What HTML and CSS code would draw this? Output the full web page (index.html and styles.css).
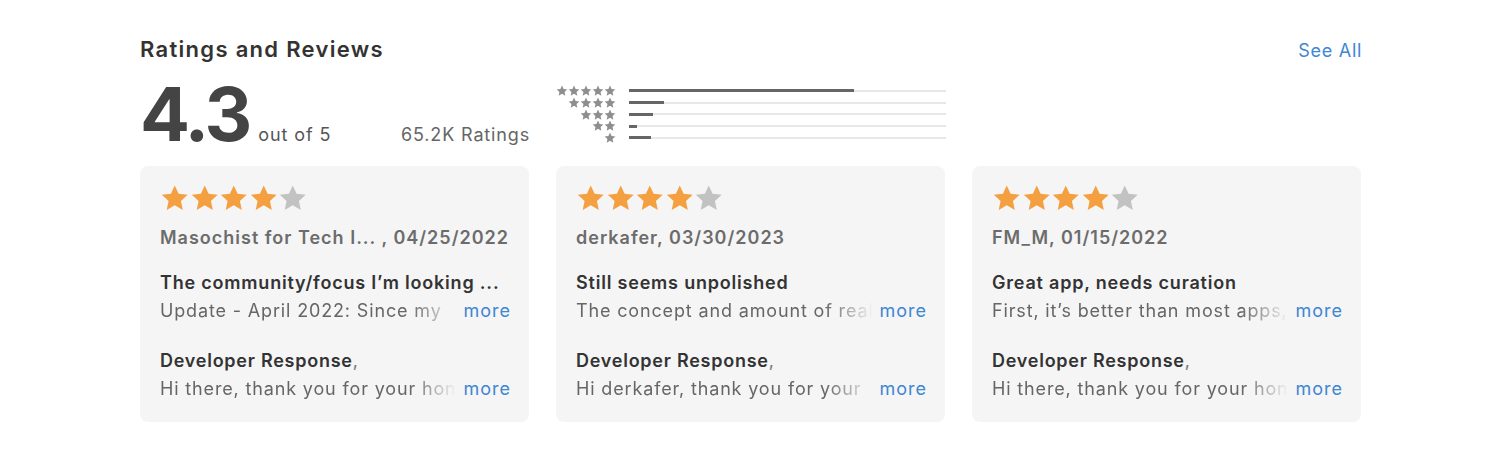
FILE: index.html
```html
<!DOCTYPE html>
<html>
<head>
<meta charset="utf-8">
<link rel="stylesheet" href="styles.css">
</head>
<body>
<svg width="0" height="0" class="defs">
  <defs>
    <symbol id="star" viewBox="0 0 24 24"><path d="M12 1.2l3.3 7.1 7.8.9-5.8 5.3 1.6 7.7L12 18.3l-6.9 3.9 1.6-7.7L.9 9.2l7.8-.9z"/></symbol>
  </defs>
</svg>
<section class="ratings">
  <header class="head">
    <h2 class="title">Ratings and Reviews</h2>
    <a class="see-all">See All</a>
  </header>
  <div class="summary">
    <div class="score"><span class="big">4.3</span><span class="outof">out of 5</span></div>
    <div class="count">65.2K Ratings</div>
    <div class="hist">
      <div class="hrow"><span class="hstars"><svg><use href="#star"/></svg><svg><use href="#star"/></svg><svg><use href="#star"/></svg><svg><use href="#star"/></svg><svg><use href="#star"/></svg></span><span class="track"><span class="fill" style="width:71%"></span></span></div>
      <div class="hrow"><span class="hstars"><svg><use href="#star"/></svg><svg><use href="#star"/></svg><svg><use href="#star"/></svg><svg><use href="#star"/></svg></span><span class="track"><span class="fill" style="width:11%"></span></span></div>
      <div class="hrow"><span class="hstars"><svg><use href="#star"/></svg><svg><use href="#star"/></svg><svg><use href="#star"/></svg></span><span class="track"><span class="fill" style="width:7.5%"></span></span></div>
      <div class="hrow"><span class="hstars"><svg><use href="#star"/></svg><svg><use href="#star"/></svg></span><span class="track"><span class="fill" style="width:2.6%"></span></span></div>
      <div class="hrow"><span class="hstars"><svg><use href="#star"/></svg></span><span class="track"><span class="fill" style="width:7%"></span></span></div>
    </div>
  </div>
  <div class="cards">
    <article class="card">
      <div class="stars"><svg class="on"><use href="#star"/></svg><svg class="on"><use href="#star"/></svg><svg class="on"><use href="#star"/></svg><svg class="on"><use href="#star"/></svg><svg class="off"><use href="#star"/></svg></div>
      <div class="author">Masochist for Tech I... , 04/25/2022</div>
      <div class="rtitle">The community/focus I’m looking ...</div>
      <div class="line"><span class="text">Update - April 2022: Since my</span><a class="more">more</a></div>
      <div class="dev">Developer Response<span class="comma">,</span></div>
      <div class="line"><span class="text">Hi there, thank you for your hon</span><a class="more">more</a></div>
    </article>
    <article class="card">
      <div class="stars"><svg class="on"><use href="#star"/></svg><svg class="on"><use href="#star"/></svg><svg class="on"><use href="#star"/></svg><svg class="on"><use href="#star"/></svg><svg class="off"><use href="#star"/></svg></div>
      <div class="author">derkafer, 03/30/2023</div>
      <div class="rtitle">Still seems unpolished</div>
      <div class="line"><span class="text">The concept and amount of real</span><a class="more">more</a></div>
      <div class="dev">Developer Response<span class="comma">,</span></div>
      <div class="line"><span class="text">Hi derkafer, thank you for your</span><a class="more">more</a></div>
    </article>
    <article class="card">
      <div class="stars"><svg class="on"><use href="#star"/></svg><svg class="on"><use href="#star"/></svg><svg class="on"><use href="#star"/></svg><svg class="on"><use href="#star"/></svg><svg class="off"><use href="#star"/></svg></div>
      <div class="author">FM_M, 01/15/2022</div>
      <div class="rtitle">Great app, needs curation</div>
      <div class="line"><span class="text">First, it’s better than most apps,</span><a class="more">more</a></div>
      <div class="dev">Developer Response<span class="comma">,</span></div>
      <div class="line"><span class="text">Hi there, thank you for your hon</span><a class="more">more</a></div>
    </article>
  </div>
</section>
</body>
</html>
```

FILE: styles.css
```css
* { box-sizing: border-box; }
html, body { margin: 0; padding: 0; background: #fff; }
body { font-family: Inter, "Noto Sans", "Liberation Sans", sans-serif; color: #333; }
.defs { position: absolute; width: 0; height: 0; }

.ratings { width: 1222px; margin-left: 140px; padding-top: 34px; }

.head { display: flex; justify-content: space-between; align-items: center; height: 30px; }
.title { margin: 0; font-size: 22px; font-weight: 600; color: #333; letter-spacing: 1.3px; }
.see-all { font-size: 18px; color: #3f86d4; letter-spacing: 0.7px; margin-top: 2px; }

.summary { display: flex; align-items: flex-end; height: 86px; }
.score { width: 261px; display: flex; align-items: baseline; }
.big { font-size: 74px; font-weight: 700; color: #444; letter-spacing: -3px; line-height: 1; margin-bottom: -1px; }
.outof { font-size: 18px; color: #555; margin-left: 9px; letter-spacing: 0.9px; }
.count { width: 155px; font-size: 18px; color: #666; line-height: 1; padding-bottom: 6px; letter-spacing: 0.85px; }
.hist { display: flex; flex-direction: column; align-self: flex-start; margin-top: 21px; }
.hrow { display: flex; align-items: center; height: 11.75px; }
.hstars { width: 60px; display: flex; justify-content: flex-end; fill: #8e8e8e; }
.hstars svg { width: 12px; height: 11.5px; }
.track { width: 317px; margin-left: 13px; height: 2px; background: #e8e8e8; display: flex; }
.fill { height: 3px; margin-top: -0.5px; background: #666; }

.cards { display: flex; gap: 27px; margin-top: 16px; }
.card { width: 389px; height: 256px; background: #f5f5f5; border-radius: 8px; padding: 18px 18px 0 20px; }
.stars { display: flex; height: 28px; }
.stars svg { width: 29.5px; height: 28px; }
.stars .on { fill: #f4a041; }
.stars .off { fill: #c2c2c2; }
.author { margin-top: 12px; font-size: 18px; line-height: 28px; font-weight: 600; color: #6c6c6c; white-space: nowrap; letter-spacing: 1px; }
.rtitle { margin-top: 17px; font-size: 18px; line-height: 28px; font-weight: 600; color: #333; white-space: nowrap; letter-spacing: 0.8px; }
.dev { margin-top: 22px; font-size: 18px; line-height: 28px; font-weight: 600; color: #333; letter-spacing: 0.75px; }
.comma { color: #777; font-weight: 400; }
.line { display: flex; font-size: 18px; line-height: 28px; color: #666; letter-spacing: 0.85px; }
.text { flex: 1; margin-right: 6px; overflow: hidden; white-space: nowrap;
  -webkit-mask-image: linear-gradient(to right, #000 84%, transparent 100%);
  mask-image: linear-gradient(to right, #000 84%, transparent 100%); }
.more { color: #3f86d4; letter-spacing: 1px; }
```
